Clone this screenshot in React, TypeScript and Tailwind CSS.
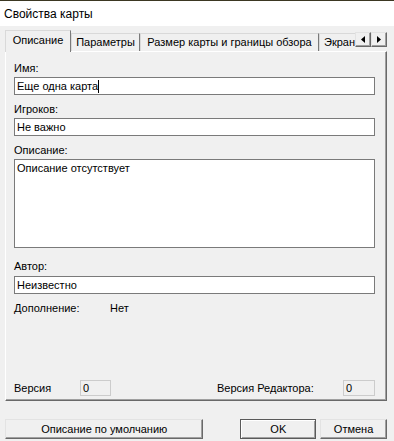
import React from 'react';

const font = { fontFamily: '"Liberation Sans", Arial, sans-serif' };

const Label: React.FC<{ text: string; className?: string }> = ({ text, className = '' }) => (
  <div className={`h-[14px] leading-[14px] text-[11px] text-black ${className}`}>{text}</div>
);

const Field: React.FC<{ value: string; caret?: boolean; className?: string }> = ({ value, caret, className = '' }) => (
  <div className={`flex items-center bg-white border border-[#7a7a7a] pl-[2px] text-[11px] text-black ${className}`}>
    <span>{value}</span>
    {caret && <span className="w-px h-[13px] bg-black" />}
  </div>
);

const Tab: React.FC<{ text: string; w: string; active?: boolean }> = ({ text, w, active }) => (
  <div
    className={`${w} shrink-0 flex items-center justify-center overflow-hidden whitespace-nowrap text-[11px] text-black bg-[#f0f0f0] border-t border-l border-r border-t-[#d9d9d9] border-l-[#d9d9d9] border-r-[#7a7a7a] ${
      active ? 'h-[22px] relative z-10 -mb-px pb-[3px]' : 'h-[18px]'
    }`}
  >
    {text}
  </div>
);

const Btn: React.FC<{ text: string; w: string; def?: boolean }> = ({ text, w, def }) => (
  <div
    className={`${w} h-[20px] flex items-center justify-center text-[11px] text-black bg-[#f0f0f0] border ${
      def
        ? 'border-[#5a5a5a] shadow-[inset_1px_1px_0_#ffffff,inset_-1px_-1px_0_#a0a0a0]'
        : 'border-t-[#e3e3e3] border-l-[#e3e3e3] border-r-[#696969] border-b-[#696969] shadow-[inset_-1px_-1px_0_#a0a0a0]'
    }`}
  >
    {text}
  </div>
);

const Arrow: React.FC<{ dir: 'l' | 'r' }> = ({ dir }) => (
  <div className="w-[16px] h-[15px] flex items-center justify-center bg-[#f0f0f0] border border-t-[#e3e3e3] border-l-[#e3e3e3] border-r-[#696969] border-b-[#696969] shadow-[inset_-1px_-1px_0_#a0a0a0]">
    <svg width="4" height="7" viewBox="0 0 4 7">
      {dir === 'l' ? <path d="M4 0 L0 3.5 L4 7 Z" fill="#000" /> : <path d="M0 0 L4 3.5 L0 7 Z" fill="#000" />}
    </svg>
  </div>
);

export default function App() {
  return (
    <div className="w-[394px] h-[441px] flex flex-col bg-[#f0f0f0] overflow-hidden" style={font}>
      <div className="h-px bg-[#3b3722]" />
      {/* Title bar */}
      <div className="h-[25px] bg-white flex items-center pl-[4px] text-[12px] text-black">Свойства карты</div>

      {/* Body */}
      <div className="flex flex-col pl-[5px] pr-[7px] pt-[4px]">
        {/* Tabs */}
        <div className="h-[21px] flex items-end relative">
          <Tab text="Описание" w="w-[66px]" active />
          <Tab text="Параметры" w="w-[69px]" />
          <Tab text="Размер карты и границы обзора" w="w-[179px]" />
          <div className="w-[40px] h-[18px] shrink-0 overflow-hidden whitespace-nowrap text-[11px] text-black pl-[4px] flex items-center border-t border-l border-[#d9d9d9]">
            Экран
          </div>
          {/* scroll arrows lie over the last tab */}
          <div className="absolute right-0 top-[2px] flex">
            <Arrow dir="l" />
            <Arrow dir="r" />
          </div>
        </div>

        {/* Pane */}
        <div className="h-[350px] flex flex-col bg-[#f0f0f0] border border-t-white border-l-white border-r-[#696969] border-b-[#696969] shadow-[inset_-1px_-1px_0_#a0a0a0] pl-[8px] pr-[11px] pt-[9px] pb-[4px]">
          <Label text="Имя:" />
          <Field value="Еще одна карта" caret className="h-[18px] mt-[2px]" />
          <Label text="Игроков:" className="mt-[7px]" />
          <Field value="Не важно" className="h-[18px] mt-[2px]" />
          <Label text="Описание:" className="mt-[7px]" />
          <div className="h-[89px] mt-[2px] bg-white border border-[#7a7a7a] pl-[2px] pt-[1px] text-[11px] leading-[14px] text-black">
            Описание отсутствует
          </div>
          <Label text="Автор:" className="mt-[11px]" />
          <Field value="Неизвестно" className="h-[18px] mt-[3px]" />
          <div className="flex mt-[7px]">
            <Label text="Дополнение:" className="w-[96px]" />
            <Label text="Нет" />
          </div>
          <div className="flex-1" />
          <div className="flex items-center h-[16px]">
            <span className="w-[66px] text-[11px] text-black">Версия</span>
            <div className="w-[31px] h-[16px] border border-[#cccccc] pl-[2px] text-[11px] text-black flex items-center">0</div>
            <span className="ml-[106px] w-[126px] text-[11px] text-black">Версия Редактора:</span>
            <div className="w-[32px] h-[16px] border border-[#cccccc] pl-[2px] text-[11px] text-black flex items-center">0</div>
          </div>
        </div>

        {/* Buttons */}
        <div className="flex mt-[18px]">
          <Btn text="Описание по умолчанию" w="w-[199px]" />
          <div className="w-[37px]" />
          <Btn text="OK" w="w-[76px]" def />
          <div className="w-[4px]" />
          <Btn text="Отмена" w="w-[67px]" />
        </div>
      </div>
    </div>
  );
}
